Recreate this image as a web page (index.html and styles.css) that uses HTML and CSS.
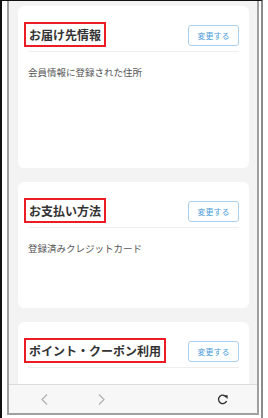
FILE: index.html
```html
<!DOCTYPE html>
<html lang="ja">
<head>
  <meta charset="UTF-8">
  <meta name="viewport" content="width=device-width, initial-scale=1.0">
  <title>注文手続き</title>
  <link rel="stylesheet" href="styles.css">
</head>
<body>
  <div class="frame">
    <div class="phone">
      <div class="screen">
        <div class="scroll">
          <section class="card card-tall">
            <div class="card-head">
              <h2 class="card-title">お届け先情報</h2>
              <button class="edit-btn">変更する</button>
            </div>
            <p class="card-text">会員情報に登録された住所</p>
          </section>
          <section class="card card-mid">
            <div class="card-head">
              <h2 class="card-title">お支払い方法</h2>
              <button class="edit-btn">変更する</button>
            </div>
            <p class="card-text">登録済みクレジットカード</p>
          </section>
          <section class="card card-mid">
            <div class="card-head">
              <h2 class="card-title">ポイント・クーポン利用</h2>
              <button class="edit-btn">変更する</button>
            </div>
          </section>
        </div>
        <div class="toolbar">
          <svg class="tb-icon" width="7" height="11" viewBox="0 0 7 11"><path d="M6 0.5 L1 5.5 L6 10.5" fill="none" stroke="#b0b0b0" stroke-width="1.2"/></svg>
          <svg class="tb-icon tb-fwd" width="7" height="11" viewBox="0 0 7 11"><path d="M1 0.5 L6 5.5 L1 10.5" fill="none" stroke="#b0b0b0" stroke-width="1.2"/></svg>
          <svg class="tb-icon tb-reload" width="12" height="11" viewBox="0 0 12 11"><path d="M9.2 3 A4.2 4.2 0 1 0 9.6 7" fill="none" stroke="#333" stroke-width="1.4"/><path d="M6.8 1.2 L10.6 1.2 L10.6 5 Z" fill="#333"/></svg>
        </div>
      </div>
    </div>
  </div>
</body>
</html>
```

FILE: styles.css
```css
body {
  margin: 0;
  background: #fff;
  font-family: "Noto Sans CJK JP", "Noto Sans", sans-serif;
}

.frame {
  width: 252px;
  height: 414px;
  padding: 0 2px 6px 5px;
  border-left: 2px solid #111;
  border-top: 1px solid #111;
  border-bottom: 2px solid #111;
  border-right: 2px solid #8a8a8a;
}

.phone {
  height: 100%;
  box-sizing: border-box;
  border-left: 2px solid #a0a0a0;
  border-right: 2px solid #a0a0a0;
  border-bottom: 2px solid #a0a0a0;
}

.screen {
  height: 100%;
  display: flex;
  flex-direction: column;
  background: #f3f3f3;
}

.scroll {
  flex: 1;
  overflow: hidden;
  padding: 5px 8px 0 9px;
}

.card {
  background: #fff;
  border-radius: 6px;
  padding: 16px 10px 0 10px;
  margin-bottom: 14px;
  box-sizing: border-box;
}
.card-tall { height: 162px; }
.card-mid { height: 126px; }

.card-head {
  display: flex;
  justify-content: space-between;
  align-items: center;
  padding-bottom: 4px;
  border-bottom: 1px solid #eeeeee;
}

.card-title {
  margin: 0 0 0 -4px;
  padding: 2px 3px;
  border: 2px solid #ec1c24;
  font-size: 12px;
  line-height: 17px;
  font-weight: bold;
  color: #333;
}

.edit-btn {
  width: 51px;
  height: 21px;
  margin-top: 2px;
  padding: 0;
  box-sizing: border-box;
  background: #fff;
  border: 1px solid #a9d0ee;
  border-radius: 3px;
  color: #4b9bd9;
  font-family: inherit;
  font-size: 8px;
  line-height: 19px;
}

.card-text {
  margin: 13px 0 0;
  font-size: 9.5px;
  line-height: 14px;
  color: #555;
}

.toolbar {
  height: 28px;
  display: flex;
  align-items: center;
  padding: 0 28px 0 32px;
  background: #f7f7f7;
  border-top: 1px solid #dcdcdc;
}
.tb-fwd { margin-left: 50px; }
.tb-reload { margin-left: auto; }
```
